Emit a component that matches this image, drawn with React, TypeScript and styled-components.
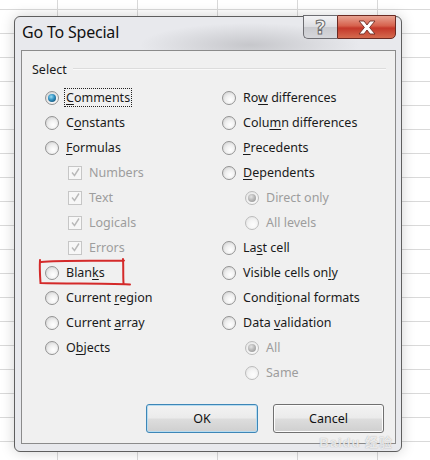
import React from 'react';
import styled, { createGlobalStyle, css } from 'styled-components';

const GlobalStyle = createGlobalStyle`
  html, body {
    margin: 0;
    padding: 0;
    height: 460px;
    overflow: hidden;
  }
  body {
    background-color: #fff;
    background-image:
      linear-gradient(to right, #d9d9d9 1px, transparent 1px),
      linear-gradient(to bottom, #d9d9d9 1px, transparent 1px);
    background-size: 80px 24px;
    background-position: 57px 9px;
    font-family: "Noto Sans", "Open Sans", sans-serif;
  }
`;

interface Option {
  label: string;
  hotkey?: number;
  kind?: 'radio' | 'check';
  sub?: boolean;
  checked?: boolean;
  disabled?: boolean;
  focused?: boolean;
}

const leftOptions: Option[] = [
  { label: 'Comments', hotkey: 0, checked: true, focused: true },
  { label: 'Constants', hotkey: 1 },
  { label: 'Formulas', hotkey: 0 },
  { label: 'Numbers', kind: 'check', sub: true, checked: true, disabled: true },
  { label: 'Text', kind: 'check', sub: true, checked: true, disabled: true },
  { label: 'Logicals', kind: 'check', sub: true, checked: true, disabled: true },
  { label: 'Errors', kind: 'check', sub: true, checked: true, disabled: true },
  { label: 'Blanks', hotkey: 4 },
  { label: 'Current region', hotkey: 8 },
  { label: 'Current array', hotkey: 8 },
  { label: 'Objects', hotkey: 1 },
];

const rightOptions: Option[] = [
  { label: 'Row differences', hotkey: 2 },
  { label: 'Column differences', hotkey: 4 },
  { label: 'Precedents', hotkey: 0 },
  { label: 'Dependents', hotkey: 0 },
  { label: 'Direct only', sub: true, checked: true, disabled: true },
  { label: 'All levels', sub: true, disabled: true },
  { label: 'Last cell', hotkey: 2 },
  { label: 'Visible cells only', hotkey: 16 },
  { label: 'Conditional formats', hotkey: 5 },
  { label: 'Data validation', hotkey: 5 },
  { label: 'All', sub: true, checked: true, disabled: true },
  { label: 'Same', sub: true, disabled: true },
];

const renderLabel = (o: Option) => {
  if (o.hotkey === undefined) return o.label;
  const i = o.hotkey;
  return (
    <>
      {o.label.slice(0, i)}
      <u>{o.label.charAt(i)}</u>
      {o.label.slice(i + 1)}
    </>
  );
};

const CheckMark = () => (
  <svg width="11" height="11" viewBox="0 0 11 11">
    <path d="M2 5.5 L4.5 8.5 L9 1.5" fill="none" stroke="#b9b9b9" strokeWidth="1.4" />
  </svg>
);

const CloseGlyph = () => (
  <svg width="22" height="17" viewBox="0 0 22 17">
    <path
      d="M3 2 H8 L11 6 L14 2 H19 L13.6 8.5 L19 15 H14 L11 11 L8 15 H3 L8.4 8.5 Z"
      fill="#fff"
      stroke="#6e2b22"
      strokeWidth="0.9"
      strokeLinejoin="round"
    />
  </svg>
);

const OptionRow: React.FC<{ option: Option }> = ({ option }) => (
  <Row sub={!!option.sub}>
    {option.kind === 'check' ? (
      <CheckBox>{option.checked && <CheckMark />}</CheckBox>
    ) : (
      <Radio checked={!!option.checked} disabled={!!option.disabled} />
    )}
    <Label disabled={!!option.disabled} focused={!!option.focused}>
      {renderLabel(option)}
    </Label>
  </Row>
);

const App: React.FC = () => (
  <>
    <GlobalStyle />
    <Window>
      <TitleBar>
        <Title>Go To Special</Title>
        <CaptionButtons>
          <HelpButton>?</HelpButton>
          <CloseButton>
            <CloseGlyph />
          </CloseButton>
        </CaptionButtons>
      </TitleBar>
      <Panel>
        <GroupHeader>
          <span>Select</span>
          <Etch />
        </GroupHeader>
        <Columns>
          <Column>
            {leftOptions.map((o) => (
              <OptionRow key={o.label} option={o} />
            ))}
          </Column>
          <Column>
            {rightOptions.map((o) => (
              <OptionRow key={o.label} option={o} />
            ))}
          </Column>
        </Columns>
        <ButtonRow>
          <PushButton isDefault>OK</PushButton>
          <PushButton>Cancel</PushButton>
        </ButtonRow>
        <Annotation width="96" height="30" viewBox="0 0 96 30">
          <path
            d="M3 4 C20 2 50 3 86 2.5 M85 1 C85.5 9 85 17 85.5 25 M2 2 C1.5 10 2 18 2.5 25 C30 26 60 25 92 26.5"
            fill="none"
            stroke="#d42a2a"
            strokeWidth="2"
            strokeLinecap="round"
          />
        </Annotation>
      </Panel>
      <Watermark>
        Baidu 经验
      </Watermark>
    </Window>
  </>
);

const Window = styled.div`
  position: relative;
  margin: 16px 0 0 14px;
  width: 388px;
  height: 436px;
  box-sizing: border-box;
  border: 1px solid #5e5e5e;
  border-radius: 6px;
  background: #e8e9ed;
  background-image: radial-gradient(ellipse 110px 22px at 235px 28px, rgba(110, 110, 115, 0.28), transparent);
  box-shadow: 0 0 14px rgba(0, 0, 0, 0.18);
  display: flex;
  flex-direction: column;
  padding: 0 5px 7px 6px;
`;

const TitleBar = styled.div`
  height: 33px;
  display: flex;
  justify-content: space-between;
  align-items: flex-start;
`;

const Title = styled.div`
  font-family: "Noto Sans", "Open Sans", sans-serif;
  font-size: 16px;
  color: #111;
  padding: 4px 0 0 1px;
  letter-spacing: -0.2px;
`;

const CaptionButtons = styled.div`
  display: flex;
  margin-top: -2px;
`;

const HelpButton = styled.div`
  width: 34px;
  height: 24px;
  box-sizing: border-box;
  border: 1px solid #6d6d72;
  border-right: none;
  border-radius: 0 0 0 5px;
  background: linear-gradient(#f3f3f5, #dcdde1 50%, #c9cacf 51%, #d6d7db);
  display: flex;
  justify-content: center;
  align-items: center;
  font-family: "DejaVu Sans", sans-serif;
  font-size: 19px;
  font-weight: bold;
  color: #f4f4f4;
  -webkit-text-stroke: 1px #6a6a6a;
  line-height: 1;
`;

const CloseButton = styled.div`
  width: 59px;
  height: 24px;
  box-sizing: border-box;
  border: 1px solid #6a2a22;
  border-radius: 0 0 5px 0;
  background: linear-gradient(#e8a392, #d6614c 45%, #c4382a 55%, #d46a4e);
  display: flex;
  justify-content: center;
  align-items: center;
`;

const Panel = styled.div`
  position: relative;
  flex: 1;
  box-sizing: border-box;
  border: 1px solid #8b8b8b;
  background: #f0f0f0;
  display: flex;
  flex-direction: column;
  padding: 8px 9px 10px 9px;
  font-size: 12.5px;
  color: #1a1a1a;
`;

const GroupHeader = styled.div`
  display: flex;
  align-items: center;
  height: 20px;
  gap: 6px;
  padding-left: 1px;
  font-size: 12.5px;
`;

const Etch = styled.div`
  flex: 1;
  height: 1px;
  background: #dcdcdc;
  border-bottom: 1px solid #fafafa;
`;

const Columns = styled.div`
  display: grid;
  grid-template-columns: 177px 1fr;
  padding: 6px 0 0 14px;
`;

const Column = styled.div`
  display: flex;
  flex-direction: column;
`;

const Row = styled.div<{ sub: boolean }>`
  height: 25px;
  display: flex;
  align-items: center;
  gap: 5px;
  padding-left: ${(p) => (p.sub ? '23px' : '0')};
`;

const Radio = styled.span<{ checked: boolean; disabled: boolean }>`
  position: relative;
  width: 14px;
  height: 14px;
  box-sizing: border-box;
  border-radius: 50%;
  border: 1px solid ${(p) => (p.disabled ? '#bcbcbc' : '#939393')};
  background: ${(p) =>
    p.disabled
      ? 'radial-gradient(circle at 60% 65%, #fdfdfd 0%, #f4f4f4 45%, #dedede 100%)'
      : 'radial-gradient(circle at 60% 65%, #ffffff 0%, #efefef 45%, #c8c8c8 100%)'};
  flex-shrink: 0;
  ${(p) =>
    p.checked &&
    css`
      &::after {
        content: '';
        position: absolute;
        left: 2px;
        top: 2px;
        width: 8px;
        height: 8px;
        border-radius: 50%;
        background: ${p.disabled
          ? 'radial-gradient(circle at 40% 35%, #e4e4e4 0%, #b4b4b4 50%, #8f8f8f 100%)'
          : 'radial-gradient(circle at 40% 35%, #9bdcf3 0%, #2f8fc0 45%, #0e3a58 100%)'};
      }
    `}
`;

const CheckBox = styled.span`
  width: 14px;
  height: 14px;
  box-sizing: border-box;
  border: 1px solid #c6c6c6;
  background: #f7f7f7;
  display: flex;
  align-items: center;
  justify-content: center;
  flex-shrink: 0;
`;

const Label = styled.span<{ disabled: boolean; focused: boolean }>`
  padding: 0 1px;
  line-height: 17px;
  border: 1px dotted ${(p) => (p.focused ? '#222' : 'transparent')};
  color: ${(p) => (p.disabled ? '#9d9d9d' : '#1a1a1a')};
  white-space: nowrap;
  u {
    text-underline-offset: 2px;
  }
`;

const ButtonRow = styled.div`
  margin-top: auto;
  display: flex;
  justify-content: flex-end;
  gap: 15px;
  padding-right: 2px;
`;

const PushButton = styled.div<{ isDefault?: boolean }>`
  width: ${(p) => (p.isDefault ? '112px' : '111px')};
  height: 29px;
  box-sizing: border-box;
  border: 1px solid ${(p) => (p.isDefault ? '#3d86b7' : '#707070')};
  border-radius: 3px;
  background: linear-gradient(#f3f3f3, #ebebeb 48%, #dddddd 52%, #cfcfcf);
  box-shadow: inset 0 0 0 1px ${(p) => (p.isDefault ? '#b8dcf0' : '#fcfcfc')};
  display: flex;
  align-items: center;
  justify-content: center;
  font-size: 12.5px;
  color: #111;
`;

const Annotation = styled.svg`
  position: absolute;
  left: 16px;
  top: 207px;
  overflow: visible;
`;

const Watermark = styled.div`
  position: absolute;
  right: 8px;
  bottom: 2px;
  font-family: "Liberation Sans", "Noto Sans CJK SC", sans-serif;
  font-size: 13px;
  font-weight: bold;
  line-height: 13px;
  color: rgba(255, 255, 255, 0.75);
  text-shadow: 0 0 1px rgba(110, 110, 110, 0.6);
  letter-spacing: 1px;
  pointer-events: none;
`;

export default App;
